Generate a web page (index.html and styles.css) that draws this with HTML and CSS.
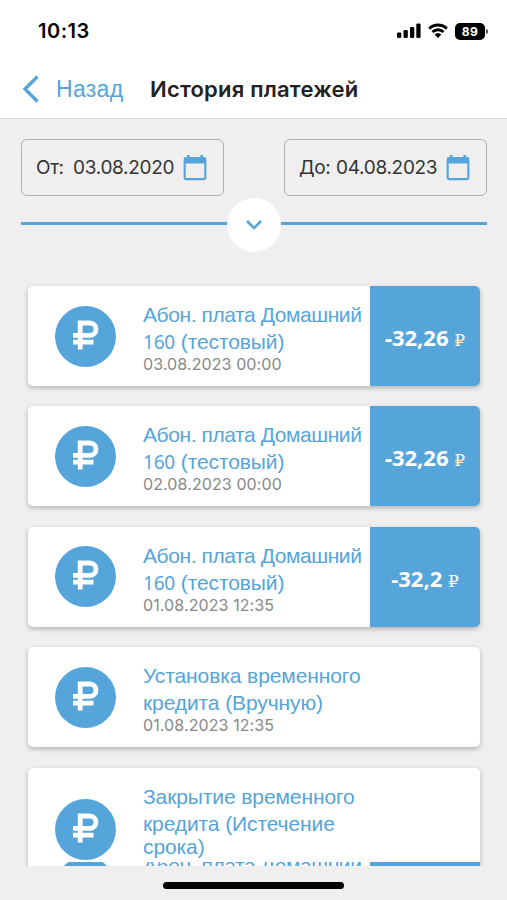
FILE: index.html
```
<!DOCTYPE html>
<html lang="ru">
<head>
	<title>История платежей</title>
	<meta charset="utf-8">
	<link rel="stylesheet" href="styles.css">
</head>
<body>
	<!-- общие иконки -->
	<svg class="sprite" width="0" height="0">
		<symbol id="ruble" viewBox="0 0 28 30">
			<path d="M8.200 29.500V3h9.600a6.200 6.200 0 0 1 0 12.400H1M1 22.200h20.500" fill="none" stroke="#fff" stroke-width="4.800"/>
		</symbol>
		<symbol id="calendar" viewBox="0 0 24 26">
			<path d="M4 0h2.600v2h10.800V0H20v2h1a2.400 2.400 0 0 1 2.400 2.400v18.400a2.400 2.400 0 0 1-2.400 2.400H3a2.400 2.400 0 0 1-2.400-2.400V4.400A2.400 2.400 0 0 1 3 2h1zM2.700 8.400v14.600h18.600V8.400z" fill="#55a5da" fill-rule="evenodd"/>
		</symbol>
	</svg>
	<div class="screen">
		<!-- статус-бар -->
		<div class="status">
			<span class="time">10:13</span>
			<div class="status-icons">
				<svg width="24" height="16" viewBox="0 0 24 16">
					<rect x="0" y="9.500" width="4.300" height="5.500" rx="1.300"/>
					<rect x="6.500" y="7" width="4.300" height="8" rx="1.300"/>
					<rect x="13" y="4" width="4.300" height="11" rx="1.300"/>
					<rect x="19.300" y="0.500" width="4.300" height="14.500" rx="1.300"/>
				</svg>
				<svg class="wifi" width="20" height="16" viewBox="0 0 20 16">
					<path d="M1.200 5.600a12.700 12.700 0 0 1 17.600 0M4.500 9a8 8 0 0 1 11 0" fill="none" stroke="#000" stroke-width="2.900"/>
					<path d="M6.600 11.500a5 5 0 0 1 6.800 0L10 15z"/>
				</svg>
				<span class="battery">89</span>
			</div>
		</div>
		<!-- шапка -->
		<div class="header">
			<a href="#" class="back">
				<svg width="18" height="28" viewBox="0 0 18 28"><path d="M15.500 1.500L3 14l12.500 12.500" fill="none" stroke="#55a5da" stroke-width="3.300"/></svg>
				<span class="back-text">Назад</span>
			</a>
			<h1 class="title">История платежей</h1>
		</div>
		<div class="content">
			<!-- период -->
			<div class="dates">
				<div class="date-box"><span class="date-label">От:</span><span class="date-value">03.08.2020</span><svg class="cal" width="24" height="26"><use href="#calendar"/></svg></div>
				<div class="date-box"><span class="date-label">До:</span><span class="date-value">04.08.2023</span><svg class="cal" width="24" height="26"><use href="#calendar"/></svg></div>
			</div>
			<div class="toggle">
				<div class="toggle-btn">
					<svg width="18" height="12" viewBox="0 0 18 12"><path d="M2 2l7 7 7-7" fill="none" stroke="#55a5da" stroke-width="2.600"/></svg>
				</div>
			</div>
			<!-- список платежей -->
			<div class="list">
				<div class="card">
					<div class="icon"><svg width="28" height="30"><use href="#ruble"/></svg></div>
					<div class="info">
						<div class="line l1">Абон. плата Домашний</div>
						<div class="line l2"><span class="num">160</span> (тестовый)</div>
						<div class="when">03.08.2023 00:00</div>
					</div>
					<div class="amount">-32,26 <span class="rub">₽</span></div>
				</div>
				<div class="card">
					<div class="icon"><svg width="28" height="30"><use href="#ruble"/></svg></div>
					<div class="info">
						<div class="line l1">Абон. плата Домашний</div>
						<div class="line l2"><span class="num">160</span> (тестовый)</div>
						<div class="when">02.08.2023 00:00</div>
					</div>
					<div class="amount">-32,26 <span class="rub">₽</span></div>
				</div>
				<div class="card">
					<div class="icon"><svg width="28" height="30"><use href="#ruble"/></svg></div>
					<div class="info">
						<div class="line l1">Абон. плата Домашний</div>
						<div class="line l2"><span class="num">160</span> (тестовый)</div>
						<div class="when">01.08.2023 12:35</div>
					</div>
					<div class="amount">-32,2 <span class="rub">₽</span></div>
				</div>
				<div class="card">
					<div class="icon"><svg width="28" height="30"><use href="#ruble"/></svg></div>
					<div class="info">
						<div class="line">Установка временного</div>
						<div class="line">кредита (Вручную)</div>
						<div class="when">01.08.2023 12:35</div>
					</div>
				</div>
				<div class="card tall">
					<div class="icon"><svg width="28" height="30"><use href="#ruble"/></svg></div>
					<div class="info">
						<div class="line">Закрытие временного</div>
						<div class="line">кредита (Истечение</div>
						<div class="line third">срока)</div>
					</div>
				</div>
				<!-- край следующей карточки -->
				<div class="peek">
					<div class="card">
						<div class="icon"></div>
						<div class="info">
							<div class="line l1">Абон. плата Домашний</div>
						</div>
						<div class="amount"></div>
					</div>
				</div>
			</div>
		</div>
		<div class="bottom"><div class="home-bar"></div></div>
	</div>
</body>
</html>
```
FILE: styles.css
```
* {
	box-sizing: border-box;
}
body {
	margin: 0;
	font-family: "Liberation Sans", Arial, sans-serif;
	background-color: #efefef;
}
.sprite {
	display: block;
	position: absolute;
}
.screen {
	width: 507px;
	height: 900px;
	display: flex;
	flex-direction: column;
	overflow: hidden;
}
/* статус-бар */
.status {
	height: 60px;
	flex: none;
	display: flex;
	justify-content: space-between;
	align-items: center;
	padding: 2px 19px 0 38px;
	background-color: #fff;
}
.time {
	font-family: Inter, sans-serif;
	font-size: 20px;
	font-weight: 600;
	letter-spacing: 0.5px;
}
.status-icons {
	display: flex;
	align-items: center;
}
.wifi {
	margin-left: 7px;
	margin-right: 7px;
}
.battery {
	position: relative;
	width: 30px;
	height: 17px;
	margin-right: 3px;
	border-radius: 5px;
	background-color: #000;
	color: #fff;
	font: 700 12px/17px Inter, sans-serif;
	letter-spacing: 0.5px;
	text-align: center;
}
.battery::after {
	content: "";
	position: absolute;
	right: -3px;
	top: 6px;
	width: 2px;
	height: 5px;
	border-radius: 0 2px 2px 0;
	background-color: #555;
}
/* шапка */
.header {
	height: 59px;
	flex: none;
	display: flex;
	align-items: center;
	padding-left: 22px;
	background-color: #fff;
	border-bottom: 1px solid #dcdcdc;
}
.back {
	display: flex;
	align-items: center;
	width: 128px;
	color: #55a5da;
	text-decoration: none;
}
.back-text {
	margin-left: 16px;
	font-size: 23px;
	letter-spacing: 0.3px;
}
.title {
	margin: 0;
	font: 600 22px/28px Inter, sans-serif;
	letter-spacing: 0.2px;
	color: #222;
	white-space: nowrap;
}
.content {
	height: 747px;
	flex: none;
	padding: 20px 20px 0 21px;
	overflow: hidden;
}
/* период */
.dates {
	display: flex;
	justify-content: space-between;
}
.date-box {
	display: flex;
	align-items: center;
	width: 203px;
	height: 57px;
	padding-left: 14px;
	border: 1px solid #b0b0b0;
	border-radius: 6px;
	font: 400 19px/24px Inter, sans-serif;
	color: #333;
	white-space: nowrap;
}
.date-label {
	width: 37px;
	letter-spacing: -0.4px;
}
.date-value {
	letter-spacing: -0.3px;
}
.cal {
	margin-left: auto;
	margin-right: 16px;
}
.toggle {
	display: flex;
	justify-content: center;
	align-items: center;
	height: 54px;
	margin-top: 2px;
	background: linear-gradient(#55a5da, #55a5da) 0 24px / 100% 3px no-repeat;
}
.toggle-btn {
	display: flex;
	justify-content: center;
	align-items: center;
	width: 54px;
	height: 54px;
	border-radius: 50%;
	background-color: #fff;
}
/* список */
.list {
	display: flex;
	flex-direction: column;
	gap: 20.400px;
	padding: 34px 7px 0;
}
.card {
	display: flex;
	flex: none;
	height: 100px;
	border-radius: 5px;
	background-color: #fff;
	box-shadow: 0 2px 5px rgba(0,0,0,.25);
	overflow: hidden;
}
.card.tall {
	height: 124px;
}
.icon {
	display: flex;
	justify-content: center;
	align-items: center;
	align-self: center;
	width: 61px;
	height: 61px;
	margin-left: 27px;
	padding-bottom: 3px;
	border-radius: 50%;
	background-color: #55a5da;
}
.info {
	width: 227px;
	margin-left: 27px;
	padding-top: 15px;
	white-space: nowrap;
}
.line {
	height: 27px;
	line-height: 27px;
	font-size: 21px;
	letter-spacing: -0.1px;
	color: #55a5da;
}
.line.l1 {
	letter-spacing: -0.420px;
}
.line.l2 {
	letter-spacing: -0.1px;
}
.line.third {
	height: 22px;
	line-height: 20px;
}
.num {
	font-family: "Noto Sans", sans-serif;
	font-size: 19px;
	letter-spacing: -0.2px;
}
.when {
	font: 400 16px/18px Inter, sans-serif;
	letter-spacing: 0.1px;
	color: #888;
}
.amount {
	width: 110px;
	background-color: #55a5da;
	color: #fff;
	font: 700 22px/102px "Noto Sans", sans-serif;
	text-align: center;
	white-space: nowrap;
}
.rub {
	font-family: "Liberation Serif", "DejaVu Serif", serif;
	font-weight: 400;
	font-size: 17px;
}
/* видна только узкая полоска карточки */
.peek {
	height: 4px;
	margin-top: -50.400px;
	position: relative;
	overflow: hidden;
}
.peek .card {
	margin-top: -24px;
	box-shadow: none;
}
.peek .icon {
	margin-top: 0;
}
.peek .info {
	padding-top: 14px;
}
/* низ экрана */
.bottom {
	flex: 1;
	display: flex;
	justify-content: center;
	padding-top: 16px;
	background-color: #efefef;
}
.home-bar {
	width: 181px;
	height: 7px;
	border-radius: 4px;
	background-color: #000;
}
```
